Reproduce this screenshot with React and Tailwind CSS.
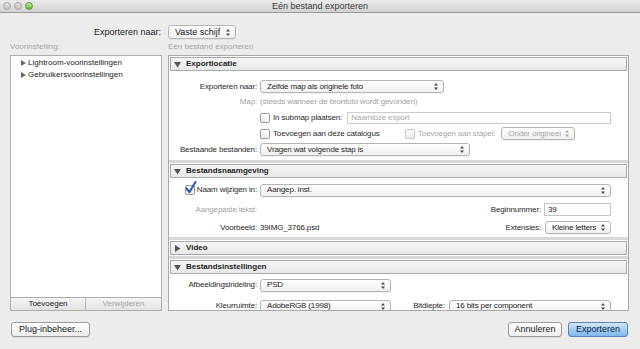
import React from 'react';

function Arrows({ dim }) {
  return (
    <svg width="4" height="7" viewBox="0 0 4 7" className="shrink-0">
      <path d="M2 0 L4 2.5 L0 2.5 Z M0 4.5 L4 4.5 L2 7 Z" fill={dim ? '#a8a8a8' : '#4a4a4a'} />
    </svg>
  );
}

function Popup({ className = '', children, dim }) {
  return (
    <div
      className={`h-[13px] flex items-center justify-between pl-[6px] pr-[5px] rounded-[3px] border border-[#b4b4b4] bg-gradient-to-b from-white to-[#f0f0f0] shadow-[0_1px_0_rgba(0,0,0,0.05)] ${className}`}
    >
      <span className={`whitespace-nowrap ${dim ? 'text-[#a6a6a6]' : 'text-[#1e1e1e]'}`}>{children}</span>
      <Arrows dim={dim} />
    </div>
  );
}

function Check({ checked, dim }) {
  return (
    <div className="relative w-[10px] h-[10px] shrink-0">
      <div className={`w-[10px] h-[10px] rounded-[2px] border ${dim ? 'border-[#c6c6c6]' : 'border-[#9c9c9c]'} bg-gradient-to-b from-white to-[#ececec]`} />
      {checked && (
        <svg width="12" height="13" viewBox="0 0 12 13" className="absolute left-[0px] top-[-4px]">
          <path d="M1.5 7.5 L4.5 11 L10.5 1" fill="none" stroke="#2a5fb3" strokeWidth="2.2" strokeLinecap="round" strokeLinejoin="round" />
        </svg>
      )}
    </div>
  );
}

function Header({ title, open = true }) {
  return (
    <div className="h-[14px] mx-[1px] flex items-center gap-[5px] pl-[3px] border border-[#a9a9a9] bg-gradient-to-b from-[#f6f6f6] to-[#e8e8e8]">
      <svg width="7" height="7" viewBox="0 0 7 7">
        {open ? <path d="M0 1 L7 1 L3.5 6.5 Z" fill="#555" /> : <path d="M1 0 L6.5 3.5 L1 7 Z" fill="#555" />}
      </svg>
      <span className="font-bold text-[#1c1c1c] tracking-normal">{title}</span>
    </div>
  );
}

function Label({ children, dim }) {
  return (
    <div className={`w-[91px] shrink-0 text-right pr-[3px] whitespace-nowrap ${dim ? 'text-[#a0a0a0]' : 'text-[#2a2a2a]'}`}>{children}</div>
  );
}

function Button({ children, className = '' }) {
  return (
    <div className={`h-[15px] flex items-center justify-center rounded-[3px] border border-[#9d9d9d] bg-gradient-to-b from-white to-[#ededed] text-[#1a1a1a] shadow-[0_1px_0_rgba(0,0,0,0.08)] ${className}`}>
      {children}
    </div>
  );
}

export default function App() {
  return (
    <div className="w-[640px] h-[349px] bg-[#ececec] overflow-hidden flex flex-col font-['Liberation_Sans',Arial,sans-serif] text-[8px] leading-none text-[#222]">
      {/* title bar */}
      <div className="h-[13px] shrink-0 grid grid-cols-[1fr_auto_1fr] items-center bg-gradient-to-b from-[#ececec] to-[#d2d2d2] border-b border-[#9a9a9a]">
        <div className="flex items-center gap-[3px] pl-[3px]">
          <div className="w-[8px] h-[8px] rounded-full border border-[#a8a8a8] bg-gradient-to-b from-[#e0e0e0] to-[#c4c4c4]" />
          <div className="w-[8px] h-[8px] rounded-full border border-[#a8a8a8] bg-gradient-to-b from-[#e0e0e0] to-[#c4c4c4]" />
          <div className="w-[8px] h-[8px] rounded-full border border-[#5d9a37] bg-gradient-to-b from-[#c7f0a0] to-[#5cb531]" />
        </div>
        <div className="text-[9px] text-[#3b3b3b]">Eén bestand exporteren</div>
        <div />
      </div>

      {/* destination */}
      <div className="mt-[12px] h-[14px] flex items-center shrink-0 text-[9px]">
        <div className="w-[161px] text-right text-[#1e1e1e]">Exporteren naar:</div>
        <Popup className="ml-[7px] w-[68px] h-[14px]">Vaste schijf</Popup>
      </div>

      <div className="mt-[2px] h-[12px] flex items-center shrink-0 text-[#a6a6a6]">
        <div className="w-[158px] pl-[10px]">Voorinstelling:</div>
        <div className="pl-[10px]">Eén bestand exporteren</div>
      </div>

      {/* main */}
      <div className="mt-[2px] h-[256px] flex shrink-0">
        <div className="ml-[10px] w-[152px] flex flex-col">
          <div className="flex-1 bg-white border border-[#adadad] pt-[1px]">
            {['Lightroom-voorinstellingen', 'Gebruikersvoorinstellingen'].map((t) => (
              <div key={t} className="h-[12px] flex items-center pl-[10px] gap-[2px]">
                <svg width="5" height="6" viewBox="0 0 5 6"><path d="M0 0 L5 3 L0 6 Z" fill="#6a6a6a" /></svg>
                <span className="text-[#222]">{t}</span>
              </div>
            ))}
          </div>
          <div className="h-[13px] flex border border-t-0 border-[#adadad] bg-gradient-to-b from-[#f6f6f6] to-[#e2e2e2]">
            <div className="w-[75px] flex items-center justify-center border-r border-[#b8b8b8] text-[#1e1e1e]">Toevoegen</div>
            <div className="flex-1 flex items-center justify-center text-[#a3a3a3]">Verwijderen</div>
          </div>
        </div>

        <div className="ml-[6px] w-[461px] border border-[#a9a9a9] bg-white overflow-hidden flex flex-col tracking-[-0.15px]">
          {/* Exportlocatie */}
          <div className="pt-[1px] pb-[2px]">
            <Header title="Exportlocatie" />
            <div className="mt-[8px] pr-[17px]">
              <div className="h-[15px] flex items-center">
                <Label>Exporteren naar:</Label>
                <Popup className="w-[184px]">Zelfde map als originele foto</Popup>
              </div>
              <div className="h-[16px] flex items-center">
                <Label dim>Map:</Label>
                <span className="text-[#a0a0a0]">(steeds wanneer de bronfoto wordt gevonden)</span>
              </div>
              <div className="h-[16px] flex items-center">
                <div className="w-[91px] shrink-0" />
                <Check />
                <span className="ml-[3px] text-[#2a2a2a] whitespace-nowrap">In submap plaatsen:</span>
                <div className="flex-1 h-[12px] ml-[5px] border border-[#cdcdcd] bg-white flex items-center pl-[3px] text-[#a8a8a8]">Naamloze export</div>
              </div>
              <div className="h-[15px] flex items-center">
                <div className="w-[91px] shrink-0" />
                <div className="w-[145px] flex items-center">
                  <Check />
                  <span className="ml-[3px] text-[#2a2a2a] whitespace-nowrap">Toevoegen aan deze catalogus</span>
                </div>
                <Check dim />
                <span className="ml-[3px] text-[#a6a6a6] whitespace-nowrap">Toevoegen aan stapel:</span>
                <Popup dim className="ml-[6px] w-[74px]">Onder origineel</Popup>
              </div>
              <div className="h-[17px] flex items-center">
                <Label>Bestaande bestanden:</Label>
                <Popup className="w-[210px]">Vragen wat volgende stap is</Popup>
              </div>
            </div>
          </div>
          <div className="h-[3px] bg-[#d8d8d8] shrink-0" />

          {/* Bestandsnaamgeving */}
          <div className="pt-[1px] pb-[1px]">
            <Header title="Bestandsnaamgeving" />
            <div className="mt-[4px] pr-[17px]">
              <div className="h-[16px] flex items-center">
                <div className="w-[91px] shrink-0 flex items-center justify-end pr-[3px] gap-[2px]">
                  <Check checked />
                  <span className="text-[#2a2a2a] whitespace-nowrap">Naam wijzigen in:</span>
                </div>
                <Popup className="flex-1">Aangep. inst.</Popup>
              </div>
              <div className="mt-[3px] h-[17px] flex items-center">
                <Label dim>Aangepaste tekst:</Label>
                <span className="ml-auto mr-[3px] text-[#2a2a2a]">Beginnummer:</span>
                <div className="w-[67px] h-[13px] border border-[#c4c4c4] bg-white flex items-center pl-[3px] text-[#1e1e1e]">39</div>
              </div>
              <div className="mt-[1px] h-[17px] flex items-center">
                <Label>Voorbeeld:</Label>
                <span className="text-[#1e1e1e]">39IMG_3766.psd</span>
                <span className="ml-auto mr-[4px] text-[#2a2a2a]">Extensies:</span>
                <Popup className="w-[66px]">Kleine letters</Popup>
              </div>
            </div>
          </div>
          <div className="h-[3px] bg-[#d8d8d8] shrink-0" />

          {/* Video */}
          <div className="pt-[1px] pb-[1px]">
            <Header title="Video" open={false} />
          </div>
          <div className="h-[3px] bg-[#d8d8d8] shrink-0" />

          {/* Bestandsinstellingen */}
          <div className="pt-[1px]">
            <Header title="Bestandsinstellingen" />
            <div className="mt-[3px] pr-[17px]">
              <div className="h-[16px] flex items-center">
                <Label>Afbeeldingsindeling:</Label>
                <Popup className="w-[131px]">PSD</Popup>
              </div>
              <div className="mt-[5px] h-[16px] flex items-center">
                <Label>Kleurruimte:</Label>
                <Popup className="w-[131px]">AdobeRGB (1998)</Popup>
                <span className="ml-auto mr-[4px] text-[#2a2a2a]">Bitdiepte:</span>
                <Popup className="w-[162px]">16 bits per component</Popup>
              </div>
            </div>
          </div>
        </div>
      </div>

      {/* bottom buttons */}
      <div className="mt-[11px] flex items-center pl-[11px] pr-[12px] shrink-0 text-[9px]">
        <Button className="w-[79px]">Plug-inbeheer...</Button>
        <div className="flex-1" />
        <Button className="w-[54px]">Annuleren</Button>
        <div className="ml-[6px] w-[60px] h-[15px] flex items-center justify-center rounded-[3px] border border-[#5b84b4] bg-gradient-to-b from-[#d4e8fb] via-[#a4cdf3] to-[#7fb8ee] text-[#10233d]">
          Exporteren
        </div>
      </div>
    </div>
  );
}
